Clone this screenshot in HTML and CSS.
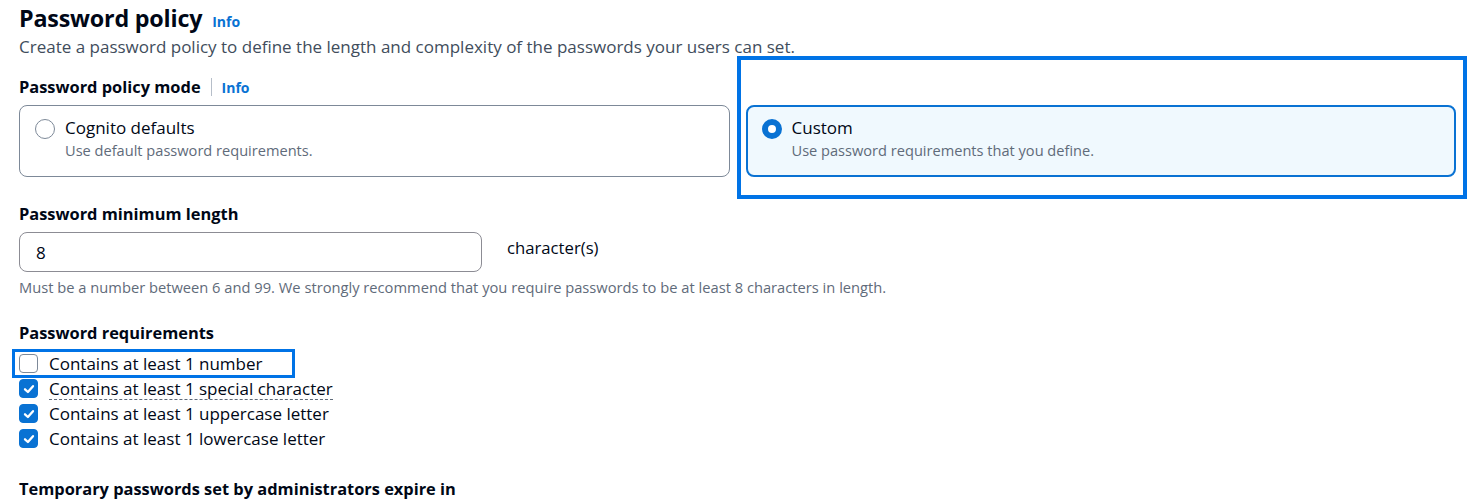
FILE: index.html
```html
<!DOCTYPE html>
<html>
<head>
<meta charset="utf-8">
<link rel="stylesheet" href="styles.css">
</head>
<body>
<div class="page">
  <div class="header">
    <h1 class="title">Password policy</h1>
    <a class="info info-h1">Info</a>
  </div>
  <p class="description">Create a password policy to define the length and complexity of the passwords your users can set.</p>

  <div class="field field-mode">
    <div class="label-row">
      <span class="label">Password policy mode</span>
      <span class="divider"></span>
      <a class="info">Info</a>
    </div>
    <div class="tiles">
      <div class="tile">
        <span class="radio"></span>
        <div class="tile-text">
          <div class="tile-title">Cognito defaults</div>
          <div class="tile-desc">Use default password requirements.</div>
        </div>
      </div>
      <div class="tile tile-selected">
        <span class="radio radio-on"></span>
        <div class="tile-text">
          <div class="tile-title">Custom</div>
          <div class="tile-desc">Use password requirements that you define.</div>
        </div>
      </div>
    </div>
    <div class="highlight highlight-custom"></div>
  </div>

  <div class="field field-length">
    <div class="label">Password minimum length</div>
    <div class="input-row">
      <div class="input">8</div>
      <span class="suffix">character(s)</span>
    </div>
    <div class="hint">Must be a number between 6 and 99. We strongly recommend that you require passwords to be at least 8 characters in length.</div>
  </div>

  <div class="field field-req">
    <div class="label">Password requirements</div>
    <div class="checks">
      <div class="check-row">
        <span class="checkbox"></span>
        <span class="check-label">Contains at least 1 number</span>
        <div class="highlight highlight-number"></div>
      </div>
      <div class="check-row">
        <span class="checkbox checked"><svg viewBox="0 0 14 14" width="14" height="14"><path d="M3 7.3 L5.9 10 L11 4.2" fill="none" stroke="#fff" stroke-width="2.3" stroke-linecap="round" stroke-linejoin="round"/></svg></span>
        <span class="check-label dotted">Contains at least 1 special character</span>
      </div>
      <div class="check-row">
        <span class="checkbox checked"><svg viewBox="0 0 14 14" width="14" height="14"><path d="M3 7.3 L5.9 10 L11 4.2" fill="none" stroke="#fff" stroke-width="2.3" stroke-linecap="round" stroke-linejoin="round"/></svg></span>
        <span class="check-label">Contains at least 1 uppercase letter</span>
      </div>
      <div class="check-row">
        <span class="checkbox checked"><svg viewBox="0 0 14 14" width="14" height="14"><path d="M3 7.3 L5.9 10 L11 4.2" fill="none" stroke="#fff" stroke-width="2.3" stroke-linecap="round" stroke-linejoin="round"/></svg></span>
        <span class="check-label">Contains at least 1 lowercase letter</span>
      </div>
    </div>
  </div>

  <div class="field field-temp">
    <div class="label">Temporary passwords set by administrators expire in</div>
  </div>
</div>
</body>
</html>
```

FILE: styles.css
```css
* { box-sizing: border-box; }
html, body { margin: 0; padding: 0; background: #fff; }
body {
  font-family: "Open Sans", "Noto Sans", "Liberation Sans", sans-serif;
  color: #000716;
  font-size: 17px;
  overflow: hidden;
}
.page {
  padding: 2px 14px 0 19px;
  width: 1470px;
  height: 503px;
}
.header {
  display: flex;
  align-items: baseline;
  gap: 10px;
}
.title {
  margin: 0;
  font-size: 23.3px;
  line-height: 32px;
  font-weight: 700;
  letter-spacing: -0.2px;
  color: #000716;
}
.info {
  color: #0972d3;
  font-weight: 700;
  font-size: 14px;
  text-decoration: none;
}
.description {
  margin: 1px 0 0 0;
  color: #414d5c;
  font-size: 17px;
  line-height: 24px;
}
.field { position: relative; }
.field-mode { margin-top: 16px; }
.label-row {
  display: flex;
  align-items: center;
  height: 24px;
}
.label {
  font-weight: 700;
  font-size: 16.4px;
  line-height: 24px;
}
.divider {
  width: 1px;
  height: 18px;
  background: #b6bec9;
  margin: 0 10px;
}
.tiles {
  margin-top: 6px;
  display: grid;
  grid-template-columns: 1fr 1fr;
  gap: 16px;
}
.tile {
  display: flex;
  align-items: flex-start;
  gap: 10px;
  border: 1px solid #7d8998;
  border-radius: 8px;
  padding: 11px 15px 15px 15px;
  height: 72px;
}
.tile-selected {
  border: 2px solid #0972d3;
  background: #f0f9fe;
  padding: 10px 14px 14px 14px;
}
.radio {
  flex: none;
  width: 20px;
  height: 20px;
  margin-top: 2px;
  border-radius: 50%;
  border: 1.5px solid #7d8998;
  background: #fff;
}
.radio-on {
  border: 6px solid #0972d3;
}
.tile-text { display: flex; flex-direction: column; }
.tile-title { font-size: 17px; line-height: 22px; color: #000716; }
.tile-desc { font-size: 14.6px; line-height: 20px; color: #5f6b7a; margin-top: 1px; }

.highlight {
  position: absolute;
  border: 4px solid #0073e6;
  pointer-events: none;
}
.highlight-custom {
  left: 718px;
  top: -19px;
  width: 730px;
  height: 143px;
}

.field-length { margin-top: 25px; }
.input-row {
  margin-top: 6px;
  display: flex;
  align-items: flex-start;
  gap: 25px;
}
.input {
  width: 463px;
  height: 40px;
  border: 1px solid #8c8c94;
  border-radius: 8px;
  padding: 0 0 0 16px;
  display: flex;
  align-items: center;
  font-size: 17px;
}
.suffix { font-size: 16.7px; line-height: 32px; }
.hint {
  margin-top: 5px;
  font-size: 14.7px;
  line-height: 20px;
  color: #5f6b7a;
}

.field-req { margin-top: 24px; }
.checks { margin-top: 6px; display: flex; flex-direction: column; }
.check-row {
  position: relative;
  display: flex;
  align-items: center;
  gap: 11px;
  height: 25px;
}
.checkbox {
  flex: none;
  width: 19px;
  height: 19px;
  border: 1.5px solid #7d8998;
  border-radius: 4px;
  background: #fff;
  display: flex;
  align-items: center;
  justify-content: center;
}
.checkbox.checked {
  background: #0972d3;
  border-color: #0972d3;
}
.check-label { font-size: 17px; line-height: 22px; }
.dotted {
  border-bottom: 1px dashed #5f6b7a;
  line-height: 21px;
  margin-top: 1px;
}
.highlight-number {
  left: -7px;
  top: -2px;
  width: 283px;
  height: 29px;
  border-width: 3px;
}
.field-temp { margin-top: 26px; }
```
